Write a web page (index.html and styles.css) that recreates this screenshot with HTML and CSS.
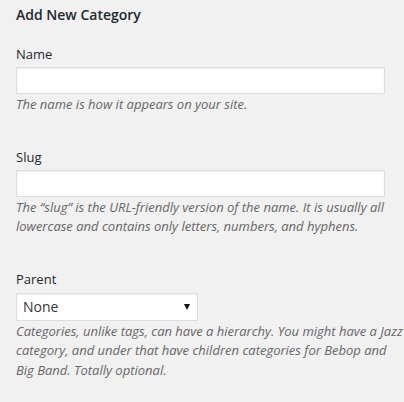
FILE: index.html
```html
<!DOCTYPE html>
<html>
<head>
<meta charset="utf-8">
<link rel="stylesheet" href="styles.css">
</head>
<body>
<div class="form-wrap">
  <h3 class="title">Add New Category</h3>
  <div class="field">
    <label class="label" for="tag-name">Name</label>
    <input class="text-input" id="tag-name" type="text">
    <p class="description">The name is how it appears on your site.</p>
  </div>
  <div class="field">
    <label class="label" for="tag-slug">Slug</label>
    <input class="text-input" id="tag-slug" type="text">
    <p class="description">The “slug” is the URL-friendly version of the name. It is usually all lowercase and contains only letters, numbers, and hyphens.</p>
  </div>
  <div class="field">
    <label class="label" for="parent">Parent</label>
    <div class="select-wrap">
      <select class="select" id="parent"><option>None</option></select>
    </div>
    <p class="description">Categories, unlike tags, can have a hierarchy. You might have a Jazz category, and under that have children categories for Bebop and Big Band. Totally optional.</p>
  </div>
</div>
</body>
</html>
```
FILE: styles.css
```css
html, body {
  margin: 0;
  padding: 0;
  background: #f1f1f1;
}
body {
  font-family: "Open Sans", "Liberation Sans", sans-serif;
  font-size: 13px;
  color: #23282d;
}
.form-wrap {
  padding: 5px 0 0 16px;
  display: flex;
  flex-direction: column;
  gap: 0;
}
.title {
  margin: 0;
  font-size: 14px;
  font-weight: 600;
  line-height: 20px;
  color: #23282d;
}
.field {
  display: flex;
  flex-direction: column;
  align-items: flex-start;
  margin-top: 19px;
}
.field + .field {
  margin-top: 32px;
}
.label {
  display: block;
  line-height: 20px;
  margin-bottom: 3px;
}
.text-input {
  box-sizing: border-box;
  width: 369px;
  height: 27px;
  margin: 0;
  padding: 3px 5px;
  border: 1px solid #ddd;
  background: #fff;
  box-shadow: inset 0 1px 2px rgba(0, 0, 0, 0.07);
  font-family: inherit;
  font-size: 14px;
  outline: none;
}
.description {
  margin: 1px 0 0;
  font-style: italic;
  color: #666;
  line-height: 19.5px;
}
.select-wrap {
  position: relative;
  width: 182px;
  height: 28px;
  margin-top: 1px;
}
.select-wrap::after {
  content: "";
  position: absolute;
  right: 8px;
  top: 11px;
  width: 0;
  height: 0;
  border-left: 3px solid transparent;
  border-right: 3px solid transparent;
  border-top: 6px solid #111;
  pointer-events: none;
}
.select {
  -webkit-appearance: none;
  appearance: none;
  box-sizing: border-box;
  width: 100%;
  height: 28px;
  margin: 0;
  padding: 2px 6px;
  border: 1px solid #ddd;
  border-radius: 0;
  background: #fff;
  box-shadow: inset 0 1px 2px rgba(0, 0, 0, 0.07);
  font-family: inherit;
  font-size: 14px;
  color: #32373c;
  outline: none;
}
```
